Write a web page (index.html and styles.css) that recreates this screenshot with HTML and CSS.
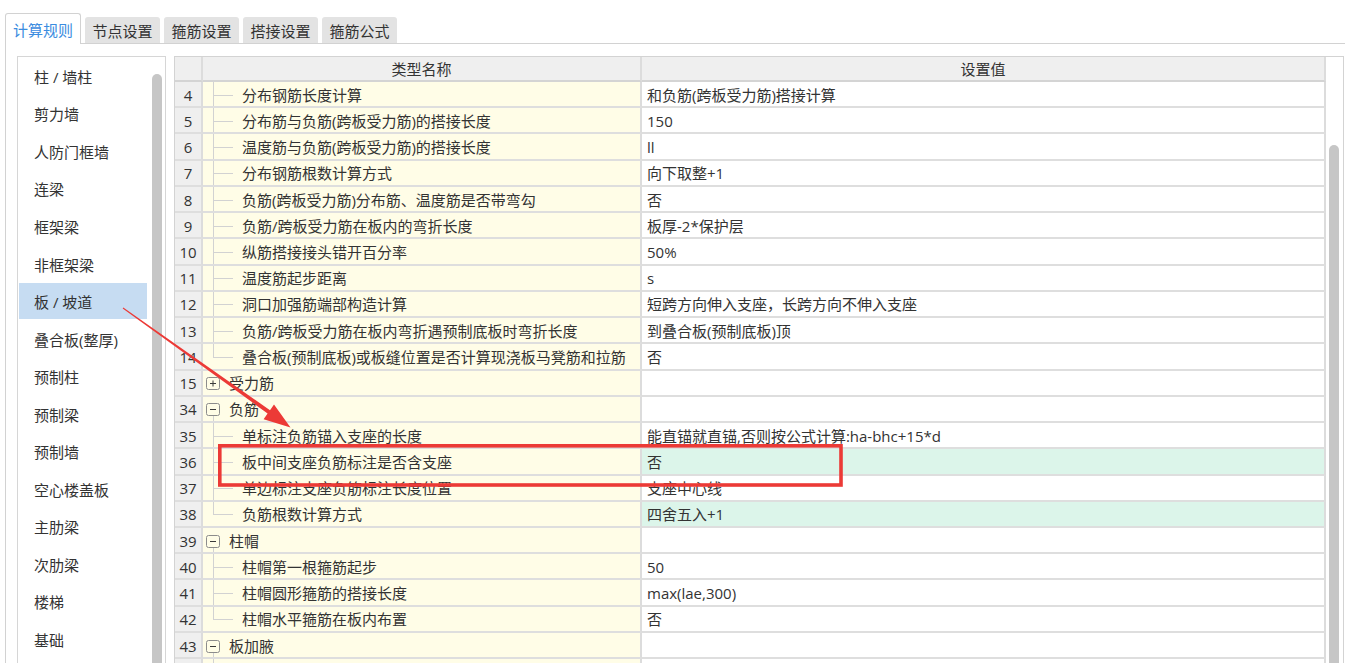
FILE: index.html
```html
<!DOCTYPE html>
<html lang="zh-CN">
<head>
<meta charset="utf-8">
<title>计算规则</title>
<link rel="stylesheet" href="styles.css">
</head>
<body>
<div class="tabs">
  <div class="tab active">计算规则</div>
  <div class="tab">节点设置</div>
  <div class="tab">箍筋设置</div>
  <div class="tab">搭接设置</div>
  <div class="tab">箍筋公式</div>
</div>
<div class="panel">
  <div class="side">
    <ul class="side-list">
      <li>柱 / 墙柱</li>
      <li>剪力墙</li>
      <li>人防门框墙</li>
      <li>连梁</li>
      <li>框架梁</li>
      <li>非框架梁</li>
      <li class="sel">板 / 坡道</li>
      <li>叠合板(整厚)</li>
      <li>预制柱</li>
      <li>预制梁</li>
      <li>预制墙</li>
      <li>空心楼盖板</li>
      <li>主肋梁</li>
      <li>次肋梁</li>
      <li>楼梯</li>
      <li>基础</li>
    </ul>
    <div class="side-scroll"><div class="thumb"></div></div>
  </div>
  <div class="table-box">
    <div class="grid">
      <div class="row head"><div class="c num"></div><div class="c name">类型名称</div><div class="c val">设置值</div></div>
      <div class="row"><div class="c num">4</div><div class="c name"><span class="tree"></span><span class="lbl">分布钢筋长度计算</span></div><div class="c val">和负筋(跨板受力筋)搭接计算</div></div>
      <div class="row"><div class="c num">5</div><div class="c name"><span class="tree"></span><span class="lbl">分布筋与负筋(跨板受力筋)的搭接长度</span></div><div class="c val">150</div></div>
      <div class="row"><div class="c num">6</div><div class="c name"><span class="tree"></span><span class="lbl">温度筋与负筋(跨板受力筋)的搭接长度</span></div><div class="c val">ll</div></div>
      <div class="row"><div class="c num">7</div><div class="c name"><span class="tree"></span><span class="lbl">分布钢筋根数计算方式</span></div><div class="c val">向下取整+1</div></div>
      <div class="row"><div class="c num">8</div><div class="c name"><span class="tree"></span><span class="lbl">负筋(跨板受力筋)分布筋、温度筋是否带弯勾</span></div><div class="c val">否</div></div>
      <div class="row"><div class="c num">9</div><div class="c name"><span class="tree"></span><span class="lbl">负筋/跨板受力筋在板内的弯折长度</span></div><div class="c val">板厚-2*保护层</div></div>
      <div class="row"><div class="c num">10</div><div class="c name"><span class="tree"></span><span class="lbl">纵筋搭接接头错开百分率</span></div><div class="c val">50%</div></div>
      <div class="row"><div class="c num">11</div><div class="c name"><span class="tree"></span><span class="lbl">温度筋起步距离</span></div><div class="c val">s</div></div>
      <div class="row"><div class="c num">12</div><div class="c name"><span class="tree"></span><span class="lbl">洞口加强筋端部构造计算</span></div><div class="c val">短跨方向伸入支座，长跨方向不伸入支座</div></div>
      <div class="row"><div class="c num">13</div><div class="c name"><span class="tree"></span><span class="lbl">负筋/跨板受力筋在板内弯折遇预制底板时弯折长度</span></div><div class="c val">到叠合板(预制底板)顶</div></div>
      <div class="row"><div class="c num">14</div><div class="c name"><span class="tree last"></span><span class="lbl">叠合板(预制底板)或板缝位置是否计算现浇板马凳筋和拉筋</span></div><div class="c val">否</div></div>
      <div class="row"><div class="c num">15</div><div class="c name"><span class="node"><svg class="box" width="14" height="13" viewBox="0 0 14 13"><rect x="0.5" y="0.5" width="13" height="12" rx="2" fill="#fffde7" stroke="#8c8c8c"/><path d="M4 6.5h6M7 3.5v6" stroke="#3a3a3a" stroke-width="1"/></svg></span><span class="lbl grp">受力筋</span></div><div class="c val"></div></div>
      <div class="row"><div class="c num">34</div><div class="c name"><span class="node open"><svg class="box" width="14" height="13" viewBox="0 0 14 13"><rect x="0.5" y="0.5" width="13" height="12" rx="2" fill="#fffde7" stroke="#8c8c8c"/><path d="M4 6.5h6" stroke="#3a3a3a" stroke-width="1"/></svg></span><span class="lbl grp">负筋</span></div><div class="c val"></div></div>
      <div class="row"><div class="c num">35</div><div class="c name"><span class="tree"></span><span class="lbl">单标注负筋锚入支座的长度</span></div><div class="c val">能直锚就直锚,否则按公式计算:ha-bhc+15*d</div></div>
      <div class="row"><div class="c num">36</div><div class="c name"><span class="tree"></span><span class="lbl">板中间支座负筋标注是否含支座</span></div><div class="c val green">否</div></div>
      <div class="row"><div class="c num">37</div><div class="c name"><span class="tree"></span><span class="lbl">单边标注支座负筋标注长度位置</span></div><div class="c val">支座中心线</div></div>
      <div class="row"><div class="c num">38</div><div class="c name"><span class="tree last"></span><span class="lbl">负筋根数计算方式</span></div><div class="c val green">四舍五入+1</div></div>
      <div class="row"><div class="c num">39</div><div class="c name"><span class="node open"><svg class="box" width="14" height="13" viewBox="0 0 14 13"><rect x="0.5" y="0.5" width="13" height="12" rx="2" fill="#fffde7" stroke="#8c8c8c"/><path d="M4 6.5h6" stroke="#3a3a3a" stroke-width="1"/></svg></span><span class="lbl grp">柱帽</span></div><div class="c val"></div></div>
      <div class="row"><div class="c num">40</div><div class="c name"><span class="tree"></span><span class="lbl">柱帽第一根箍筋起步</span></div><div class="c val">50</div></div>
      <div class="row"><div class="c num">41</div><div class="c name"><span class="tree"></span><span class="lbl">柱帽圆形箍筋的搭接长度</span></div><div class="c val">max(lae,300)</div></div>
      <div class="row"><div class="c num">42</div><div class="c name"><span class="tree last"></span><span class="lbl">柱帽水平箍筋在板内布置</span></div><div class="c val">否</div></div>
      <div class="row"><div class="c num">43</div><div class="c name"><span class="node open"><svg class="box" width="14" height="13" viewBox="0 0 14 13"><rect x="0.5" y="0.5" width="13" height="12" rx="2" fill="#fffde7" stroke="#8c8c8c"/><path d="M4 6.5h6" stroke="#3a3a3a" stroke-width="1"/></svg></span><span class="lbl grp">板加腋</span></div><div class="c val"></div></div>
      <div class="row"><div class="c num"></div><div class="c name"><span class="tree"></span></div><div class="c val"></div></div>
    </div>
    <div class="vscroll"><div class="thumb"></div></div>
  </div>
</div>
<svg class="annot" width="1345" height="663" viewBox="0 0 1345 663">
  <polygon fill="#ec3a36" points="123.3,307.6 270.0,410.3 274.0,404.6 290.5,427.5 263.6,419.2 267.6,413.5 122.7,308.4"/>
  <rect x="219.8" y="445.8" width="621.2" height="39.2" fill="none" stroke="#ec3a36" stroke-width="3.6"/>
</svg>
</body>
</html>
```
FILE: styles.css
```css
* { box-sizing: border-box; }
html, body { margin: 0; height: 100%; }
body {
  background: #fff;
  overflow: hidden;
  position: relative;
  font-family: "Open Sans", "Noto Sans CJK SC", sans-serif;
  font-size: 15px;
  color: #333;
}

/* tabs */
.tabs {
  display: flex;
  align-items: flex-end;
  gap: 4px;
  height: 43px;
  padding-left: 5px;
}
.tab {
  width: 75px;
  height: 26px;
  background: #e3e3e3;
  border-radius: 3px 3px 0 0;
  display: flex;
  align-items: center;
  justify-content: center;
  padding-top: 2px;
  line-height: 20px;
  white-space: nowrap;
}
.tab.active {
  position: relative;
  z-index: 1;
  width: 76px;
  height: 31px;
  margin-bottom: -1px;
  background: #fff;
  border: 1px solid #d2d2d2;
  border-bottom: none;
  color: #3b8ce0;
}

/* panel */
.panel {
  margin-left: 5px;
  border-top: 1px solid #d2d2d2;
  border-left: 1px solid #d2d2d2;
  display: flex;
  padding: 12px 0 0 11px;
  height: 700px;
}

/* left list */
.side {
  width: 149px;
  flex: none;
  height: 700px;
  border: 1px solid #d6d6d6;
  display: flex;
}
.side-list {
  flex: 1;
  list-style: none;
  margin: 0;
  padding: 1.2px 1px 0 1px;
}
.side-list li {
  height: 35.5px;
  margin-bottom: 2.03px;
  padding: 2px 0 0 15px;
  display: flex;
  align-items: center;
  line-height: 20px;
  white-space: nowrap;
}
.side-list li.sel { background: #c6dcf2; }
.side-scroll {
  width: 17px;
  flex: none;
  padding: 17px 0 0 3.5px;
}
.side-scroll .thumb,
.vscroll .thumb {
  width: 10px;
  height: 100%;
  background: #c6c6c6;
  border-radius: 5px 5px 0 0;
}

/* table */
.table-box {
  margin-left: 8px;
  width: 1170px;
  flex: none;
  height: 700px;
  border: 1px solid #d3d3d3;
  display: flex;
}
.grid { width: 1151px; flex: none; }
.vscroll {
  width: 17px;
  flex: none;
  padding: 88px 0 0 3px;
}
.row {
  display: grid;
  grid-template-columns: 28px 439px 684px;
  height: 26.24px;
}
.row.head { height: 25px; }
.c {
  border-bottom: 2px solid #dedede;
  border-right: 2px solid #dcdcdc;
  line-height: 20px;
  white-space: nowrap;
  overflow: hidden;
}
.num {
  background: #efefef;
  display: flex;
  align-items: center;
  justify-content: center;
  padding-top: 1px;
}
.name {
  background: #fffde7;
  display: flex;
  align-items: stretch;
}
.val {
  background: #fff;
  display: flex;
  align-items: center;
  padding: 1px 0 0 5px;
}
.val.green { background: #dcf5ea; }
.head .c { background: #efefef; border-bottom-color: #d4d4d4; }
.head .name, .head .val { justify-content: center; align-items: center; padding: 0; }

/* tree */
.tree {
  flex: none;
  width: 20px;
  margin-left: 10px;
  margin-bottom: -2px;
  background:
    linear-gradient(#d2d2d2, #d2d2d2) 0 0 / 1px 100% no-repeat,
    linear-gradient(#d2d2d2, #d2d2d2) 0 50% / 100% 1px no-repeat;
}
.tree.last {
  background:
    linear-gradient(#d2d2d2, #d2d2d2) 0 0 / 1px 50% no-repeat,
    linear-gradient(#d2d2d2, #d2d2d2) 0 50% / 100% 1px no-repeat;
}
.lbl {
  align-self: center;
  margin-left: 9px;
  padding-top: 1px;
}
.node {
  flex: none;
  width: 14px;
  margin-left: 3px;
  margin-bottom: -2px;
  display: flex;
  align-items: center;
  justify-content: center;
}
.node.open {
  background: linear-gradient(#d2d2d2, #d2d2d2) 7px 100% / 1px 50% no-repeat;
}
.box { display: block; }
.lbl.grp { margin-left: 9px; }

/* annotation overlay */
.annot {
  position: absolute;
  left: 0;
  top: 0;
  pointer-events: none;
}
```
